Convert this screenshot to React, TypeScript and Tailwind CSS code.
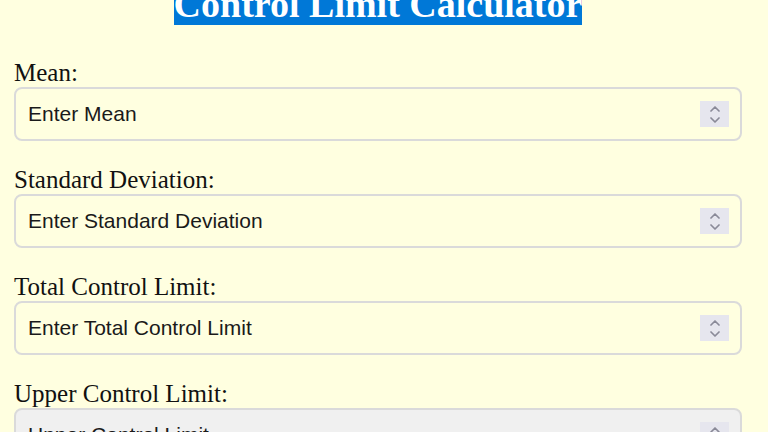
import React from "react";

function Spinner() {
  return (
    <div className="w-[29px] h-[26px] bg-[#e6e6ee] flex flex-col items-center justify-center gap-[5px] mr-[11px] shrink-0">
      <svg width="10" height="6" viewBox="0 0 10 6" fill="none">
        <path d="M1 5 L5 1 L9 5" stroke="#8a8a98" strokeWidth="1.7" strokeLinecap="round" strokeLinejoin="round" />
      </svg>
      <svg width="10" height="6" viewBox="0 0 10 6" fill="none">
        <path d="M1 1 L5 5 L9 1" stroke="#8a8a98" strokeWidth="1.7" strokeLinecap="round" strokeLinejoin="round" />
      </svg>
    </div>
  );
}

function Field({ label, placeholder, readOnly }: { label: string; placeholder: string; readOnly?: boolean }) {
  return (
    <div className="mb-[25px]">
      <div className="text-[25px] leading-[28px] text-[#111]" style={{ fontFamily: '"Liberation Serif", serif' }}>
        {label}
      </div>
      <div
        className={`h-[54px] border-2 border-[#dadada] rounded-[8px] flex items-center ${readOnly ? "bg-[#f0f0f0]" : "bg-[#ffffe0]"}`}
      >
        <span
          className="flex-1 pl-[12px] text-[21px] text-[#1a1a1a]"
          style={{ fontFamily: '"Liberation Sans", sans-serif' }}
        >
          {placeholder}
        </span>
        <Spinner />
      </div>
    </div>
  );
}

export default function App() {
  return (
    <div className="w-[768px] h-[432px] overflow-hidden bg-[#ffffe0]">
      <div className="w-[756px] px-[14px] -mt-[18px]">
        <div className="text-center mb-[26px] leading-[44px]">
          <span
            className="text-[38px] font-bold text-white bg-[#0078d7]"
            style={{ fontFamily: '"Liberation Serif", serif' }}
          >
            Control Limit Calculator
          </span>
        </div>
        <Field label="Mean:" placeholder="Enter Mean" />
        <Field label="Standard Deviation:" placeholder="Enter Standard Deviation" />
        <Field label="Total Control Limit:" placeholder="Enter Total Control Limit" />
        <Field label="Upper Control Limit:" placeholder="Upper Control Limit" readOnly />
      </div>
    </div>
  );
}
